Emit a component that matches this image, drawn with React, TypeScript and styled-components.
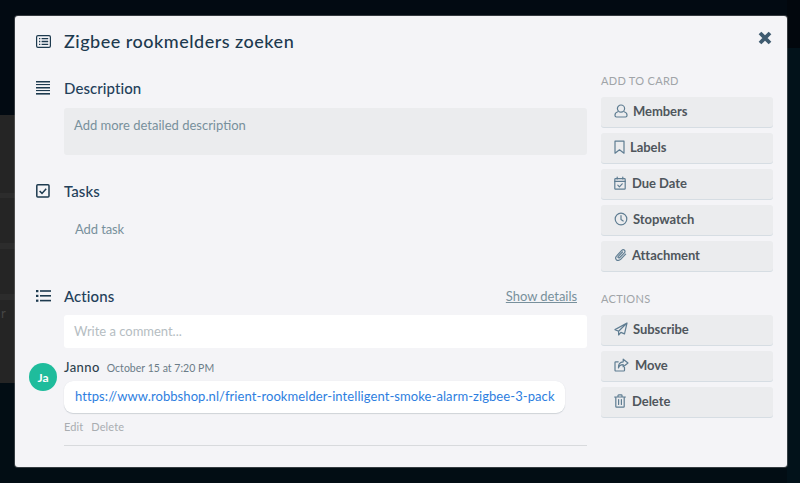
import React from 'react';
import styled, { createGlobalStyle } from 'styled-components';

const Global = createGlobalStyle`
  html, body { margin: 0; padding: 0; width: 800px; height: 483px; overflow: hidden; background: #020a12; }
  * { box-sizing: border-box; }
  body { font-family: "Lato", "Open Sans", sans-serif; }
`;

const Backdrop = styled.div`
  width: 800px; height: 483px; padding: 16px 13px 16px 15px; position: relative;
  display: flex;
  background:
    linear-gradient(#02070d 0 48px, #02121a 48px) right / 13px 100% no-repeat,
    linear-gradient(#020a12 0 115px, #252525 115px 193px, #2c2c2c 193px 198px, #252525 198px 243px,
      #2c2c2c 243px 249px, #252525 249px 294px, #2c2c2c 294px 300px, #252525 300px 383px, #020d14 383px);
`;
const BoardScrap = styled.span`
  position: absolute; left: 1px; top: 305px; font-size: 13px; color: #454545;
`;
const Modal = styled.div`
  flex: 1; background: #f4f4f7; border-radius: 3px; display: grid;
  grid-template-columns: 572px 1fr;
  position: relative; box-shadow: 0 0 0 1px rgba(150,150,150,.35);
`;
const Main = styled.div`
  padding: 14px 0 0 20px; display: flex; flex-direction: column;
`;
const Row = styled.div<{ $mt: number }>`
  display: flex; align-items: center; margin-top: ${p => p.$mt}px; height: 22px; color: #1d3a4f;
`;
const IconSlot = styled.span`
  width: 29px; padding-left: 1px; display: flex; align-items: center; color: #1d3a4f;
`;
const Title = styled.h1`
  margin: 0; font-size: 18px; font-weight: 500; color: #1d3a4f; letter-spacing: .5px;
`;
const Heading = styled.h2`
  margin: 0; font-size: 15px; font-weight: 500; color: #23405a; letter-spacing: .08px; flex: 1;
`;
const DescBox = styled.div`
  margin: 9px 0 0 29px; height: 47px; background: #ebecee; border-radius: 3px;
  padding: 9px 10px; font-size: 13px; color: #78909c; letter-spacing: 0;
`;
const AddTask = styled.div`
  margin: 19px 0 0 40px; font-size: 13px; color: #78909c; letter-spacing: -.1px;
`;
const ShowDetails = styled.a`
  font-size: 13px; color: #78909c; text-decoration: underline; margin-right: 10px; letter-spacing: -.05px;
`;
const Comment = styled.div`
  margin: 8px 0 0 29px; height: 33px; background: #fff; border-radius: 3px;
  padding: 8px 10px; font-size: 13px; color: #b5bdc2; letter-spacing: -.02px;
`;
const Entry = styled.div`
  display: grid; grid-template-columns: 29px 1fr; margin-top: 9px;
`;
const Avatar = styled.div`
  width: 28px; height: 28px; border-radius: 50%; background: #1fbc9c; color: #fff;
  margin: 6px 0 0 -6px; font-size: 12px; font-weight: 700; display: flex; align-items: center; justify-content: center;
`;
const EntryBody = styled.div`
  display: flex; flex-direction: column; align-items: flex-start;
`;
const Meta = styled.div`
  display: flex; align-items: baseline; gap: 7px; height: 20px; line-height: 20px;
`;
const Author = styled.span`
  font-size: 13px; font-weight: 500; color: #2d3f4e; letter-spacing: .4px;
`;
const Time = styled.span`
  font-size: 10.5px; color: #6b7c88; letter-spacing: .03px;
`;
const Bubble = styled.div`
  margin-top: 4px; width: 501px; height: 32px; background: #fff; border-radius: 9px; padding: 7px 11px;
  font-size: 13px; color: #2d7ee0; letter-spacing: .08px; box-shadow: 0 1px 1px #cfd3d8, 0 0 1px #dfe2e6;
  white-space: nowrap;
`;
const EntryActions = styled.div`
  display: flex; gap: 8px; margin-top: 7px; font-size: 11px; color: #a9adb1; letter-spacing: .1px;
`;
const Divider = styled.div`
  margin: 12px 0 0 29px; height: 1px; background: #d8dadd;
`;
const Side = styled.aside`
  padding: 58px 0 0 14px; display: flex; flex-direction: column;
`;
const SideHead = styled.div<{ $mt?: number }>`
  font-size: 11px; color: #a0a4a8; letter-spacing: .3px; height: 14px; line-height: 14px;
  margin: ${p => p.$mt ?? 0}px 0 9px;
`;
const Buttons = styled.div`
  display: flex; flex-direction: column; gap: 6px; width: 172px;
`;
const Btn = styled.button`
  height: 30px; border: 0; border-radius: 3px; background: #ebecee; box-shadow: 0 1px 0 #d6dde3;
  display: flex; align-items: center; padding: 0 0 2px 13px;
  font: 700 13px "Lato", sans-serif; color: #4f565c; letter-spacing: -.05px;
`;
const BtnIcon = styled.span<{ $w: number }>`
  width: ${p => p.$w}px; display: flex; align-items: center; color: #5f7d92;
`;
const Close = styled.button`
  position: absolute; top: 15px; right: 15px; border: 0; background: none; padding: 0;
  color: #3f5b70; display: flex;
`;

const Svg = ({ w = 14, h = 14, children }: { w?: number; h?: number; children: React.ReactNode }) => (
  <svg width={w} height={h} viewBox={`0 0 ${w} ${h}`} fill="none" stroke="currentColor" strokeWidth="1.2" strokeLinejoin="round" strokeLinecap="round">{children}</svg>
);
const UserIcon = () => <Svg><circle cx="7" cy="4.6" r="3.6" /><path d="M3.8 7.8C2 8.4 1 9.6 1 11v.6c0 .8.6 1.4 1.4 1.4h9.2c.8 0 1.4-.6 1.4-1.4V11c0-1.4-1-2.6-2.8-3.2" /></Svg>;
const BookmarkIcon = () => <Svg w={11}><path d="M1 1.2h9v12L5.5 9.8 1 13.2z" /></Svg>;
const CalendarIcon = () => <Svg w={12}><rect x=".8" y="2.6" width="10.4" height="10.6" rx=".8" /><path d="M.8 5.4h10.4M3.2 1v2M8.8 1v2M3.8 9.2l1.6 1.6 2.8-3" /></Svg>;
const ClockIcon = () => <Svg><circle cx="7" cy="7" r="5.8" /><path d="M7 3.6V7.4l2.2 1.6" /></Svg>;
const ClipIcon = () => <Svg w={13}><path d="M11.6 6.2l-5 5.2c-1.3 1.3-3.2 1.4-4.2.4s-.8-2.9.5-4.2l4.6-4.9c1-1 2.2-1.2 3-.5s.6 2-.4 3L5.7 9.5c-.5.5-1.1.6-1.5.2s-.2-1 .3-1.5l4-4.2" /></Svg>;
const PlaneIcon = () => <Svg><path d="M13 1L1 7.6l3.6 1.6L13 1zM13 1l-8.4 8.2V13l2.3-2.6 3.6 1.5L13 1z" /></Svg>;
const MoveIcon = () => <Svg w={15}><path d="M10.5 9.4v2.8c0 .5-.4.8-.8.8H1.8c-.5 0-.8-.3-.8-.8V4.6c0-.5.3-.8.8-.8h2.4" /><path d="M9.2 1.2L14 5l-4.8 3.8V6.6C6.6 6.6 5 7.6 4.4 10c-.4-3.6 1.6-6 4.8-6.2z" /></Svg>;
const TrashIcon = () => <Svg w={12}><path d="M.6 3h10.8M4 3V1.6c0-.4.3-.7.7-.7h2.6c.4 0 .7.3.7.7V3M1.8 3v9.4c0 .4.3.7.7.7h7c.4 0 .7-.3.7-.7V3M4.6 5.5v5M7.4 5.5v5" /></Svg>;

const CardIcon = () => (
  <svg width="15" height="13" viewBox="0 0 15 13" fill="none" stroke="currentColor" strokeWidth="1.2">
    <rect x="0.6" y="0.6" width="13.8" height="11.8" rx="1.4" />
    <path d="M3 3.6h1.3M5.6 3.6h6.6M3 6.5h1.3M5.6 6.5h6.6M3 9.4h1.3M5.6 9.4h6.6" strokeWidth="1.4" />
  </svg>
);
const LinesIcon = () => (
  <svg width="14" height="14" viewBox="0 0 14 14" fill="currentColor">
    <rect y="0" width="14" height="1.5"/><rect y="3" width="14" height="1.1"/><rect y="6" width="14" height="1.5"/><rect y="9" width="14" height="1.1"/><rect y="12" width="14" height="1.6"/>
  </svg>
);
const TaskIcon = () => (
  <svg width="14" height="14" viewBox="0 0 14 14" fill="none" stroke="currentColor">
    <rect x=".8" y=".8" width="12.2" height="12.2" rx="1" strokeWidth="1.5" />
    <path d="M3.6 7l2.4 2.4 4.2-4.6" strokeWidth="1.5" />
  </svg>
);
const ListIcon = () => (
  <svg width="15" height="12" viewBox="0 0 15 12" fill="currentColor">
    <rect x="0" y="0" width="2.4" height="2.2" /><rect x="4" y=".2" width="11" height="1.6" />
    <rect x="0" y="4.8" width="2.4" height="2.2" /><rect x="4" y="5" width="11" height="1.6" />
    <rect x="0" y="9.6" width="2.4" height="2.2" /><rect x="4" y="9.8" width="11" height="1.6" />
  </svg>
);
const CloseIcon = () => (
  <svg width="14" height="14" viewBox="0 0 14 14" fill="none" stroke="currentColor" strokeWidth="3.8">
    <path d="M2 2l10 10M12 2L2 12" />
  </svg>
);

const items1: [() => React.ReactElement, string, number][] = [
  [UserIcon, 'Members', 19], [BookmarkIcon, 'Labels', 16], [CalendarIcon, 'Due Date', 18],
  [ClockIcon, 'Stopwatch', 19], [ClipIcon, 'Attachment', 18],
];
const items2: [() => React.ReactElement, string, number][] = [
  [PlaneIcon, 'Subscribe', 19], [MoveIcon, 'Move', 21], [TrashIcon, 'Delete', 18],
];

export default function App() {
  return (
    <Backdrop>
      <Global />
      <BoardScrap>r</BoardScrap>
      <Modal>
        <Main>
          <Row $mt={0}><IconSlot><CardIcon /></IconSlot><Title>Zigbee rookmelders zoeken</Title></Row>
          <Row $mt={25}><IconSlot><LinesIcon /></IconSlot><Heading>Description</Heading></Row>
          <DescBox>Add more detailed description</DescBox>
          <Row $mt={25}><IconSlot><TaskIcon /></IconSlot><Heading>Tasks</Heading></Row>
          <AddTask>Add task</AddTask>
          <Row $mt={48}><IconSlot><ListIcon /></IconSlot><Heading>Actions</Heading><ShowDetails>Show details</ShowDetails></Row>
          <Comment>Write a comment...</Comment>
          <Entry>
            <Avatar>Ja</Avatar>
            <EntryBody>
              <Meta><Author>Janno</Author><Time>October 15 at 7:20 PM</Time></Meta>
              <Bubble>https://www.robbshop.nl/frient-rookmelder-intelligent-smoke-alarm-zigbee-3-pack</Bubble>
              <EntryActions><span>Edit</span><span>Delete</span></EntryActions>
            </EntryBody>
          </Entry>
          <Divider />
        </Main>
        <Side>
          <SideHead>ADD TO CARD</SideHead>
          <Buttons>{items1.map(([I, t, w]) => <Btn key={t}><BtnIcon $w={w}><I /></BtnIcon>{t}</Btn>)}</Buttons>
          <SideHead $mt={21}>ACTIONS</SideHead>
          <Buttons>{items2.map(([I, t, w]) => <Btn key={t}><BtnIcon $w={w}><I /></BtnIcon>{t}</Btn>)}</Buttons>
        </Side>
        <Close><CloseIcon /></Close>
      </Modal>
    </Backdrop>
  );
}
